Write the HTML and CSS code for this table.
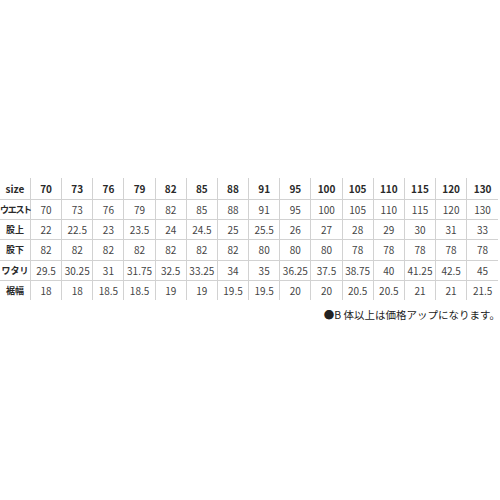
FILE: index.html
```
<!DOCTYPE html>
<html lang="ja">
<head>
<meta charset="utf-8">
<link rel="stylesheet" href="styles.css">
</head>
<body>
<div class="page">
<table class="size-table">
<colgroup><col class="c-label"><col span="15"></colgroup>
<thead>
<tr><th>size</th><th>70</th><th>73</th><th>76</th><th>79</th><th>82</th><th>85</th><th>88</th><th>91</th><th>95</th><th>100</th><th>105</th><th>110</th><th>115</th><th>120</th><th>130</th></tr>
</thead>
<tbody>
<tr><th class="narrow">ウエスト</th><td>70</td><td>73</td><td>76</td><td>79</td><td>82</td><td>85</td><td>88</td><td>91</td><td>95</td><td>100</td><td>105</td><td>110</td><td>115</td><td>120</td><td>130</td></tr>
<tr><th>股上</th><td>22</td><td>22.5</td><td>23</td><td>23.5</td><td>24</td><td>24.5</td><td>25</td><td>25.5</td><td>26</td><td>27</td><td>28</td><td>29</td><td>30</td><td>31</td><td>33</td></tr>
<tr><th>股下</th><td>82</td><td>82</td><td>82</td><td>82</td><td>82</td><td>82</td><td>82</td><td>80</td><td>80</td><td>80</td><td>78</td><td>78</td><td>78</td><td>78</td><td>78</td></tr>
<tr><th>ワタリ</th><td>29.5</td><td>30.25</td><td>31</td><td>31.75</td><td>32.5</td><td>33.25</td><td>34</td><td>35</td><td>36.25</td><td>37.5</td><td>38.75</td><td>40</td><td>41.25</td><td>42.5</td><td>45</td></tr>
<tr><th>裾幅</th><td>18</td><td>18</td><td>18.5</td><td>18.5</td><td>19</td><td>19</td><td>19.5</td><td>19.5</td><td>20</td><td>20</td><td>20.5</td><td>20.5</td><td>21</td><td>21</td><td>21.5</td></tr>
</tbody>
</table>
<p class="note">●B 体以上は価格アップになります。</p>
</div>
</body>
</html>
```
FILE: styles.css
```
html, body {
  margin: 0;
  padding: 0;
  background: #fff;
}
.page {
  width: 500px;
  height: 500px;
  padding-top: 178px;
  box-sizing: border-box;
  font-family: "Noto Sans CJK JP", "Noto Sans", sans-serif;
  color: #444;
}
.size-table {
  width: 498px;
  border-collapse: collapse;
  table-layout: fixed;
}
.c-label {
  width: 30.5px;
}
.size-table th,
.size-table td {
  height: 19.2px;
  padding: 0;
  text-align: center;
  font-size: 10px;
  font-weight: normal;
  line-height: 19px;
  border-left: 1px solid #d2d2d2;
  border-top: 1px solid #d2d2d2;
  white-space: nowrap;
  overflow: visible;
}
.size-table thead th {
  border-top: none;
  font-weight: bold;
  color: #2a2a2a;
  height: 21px;
  line-height: 21px;
}
.size-table tr > :first-child {
  border-left: none;
}
.size-table tbody th {
  font-size: 9px;
  font-weight: bold;
  color: #2a2a2a;
}
.size-table tbody th.narrow {
  letter-spacing: -1.3px;
  text-align: left;
}
.note {
  margin: 8px 0 0 0;
  text-align: right;
  font-size: 10.5px;
  line-height: 14px;
  color: #222;
}
```
